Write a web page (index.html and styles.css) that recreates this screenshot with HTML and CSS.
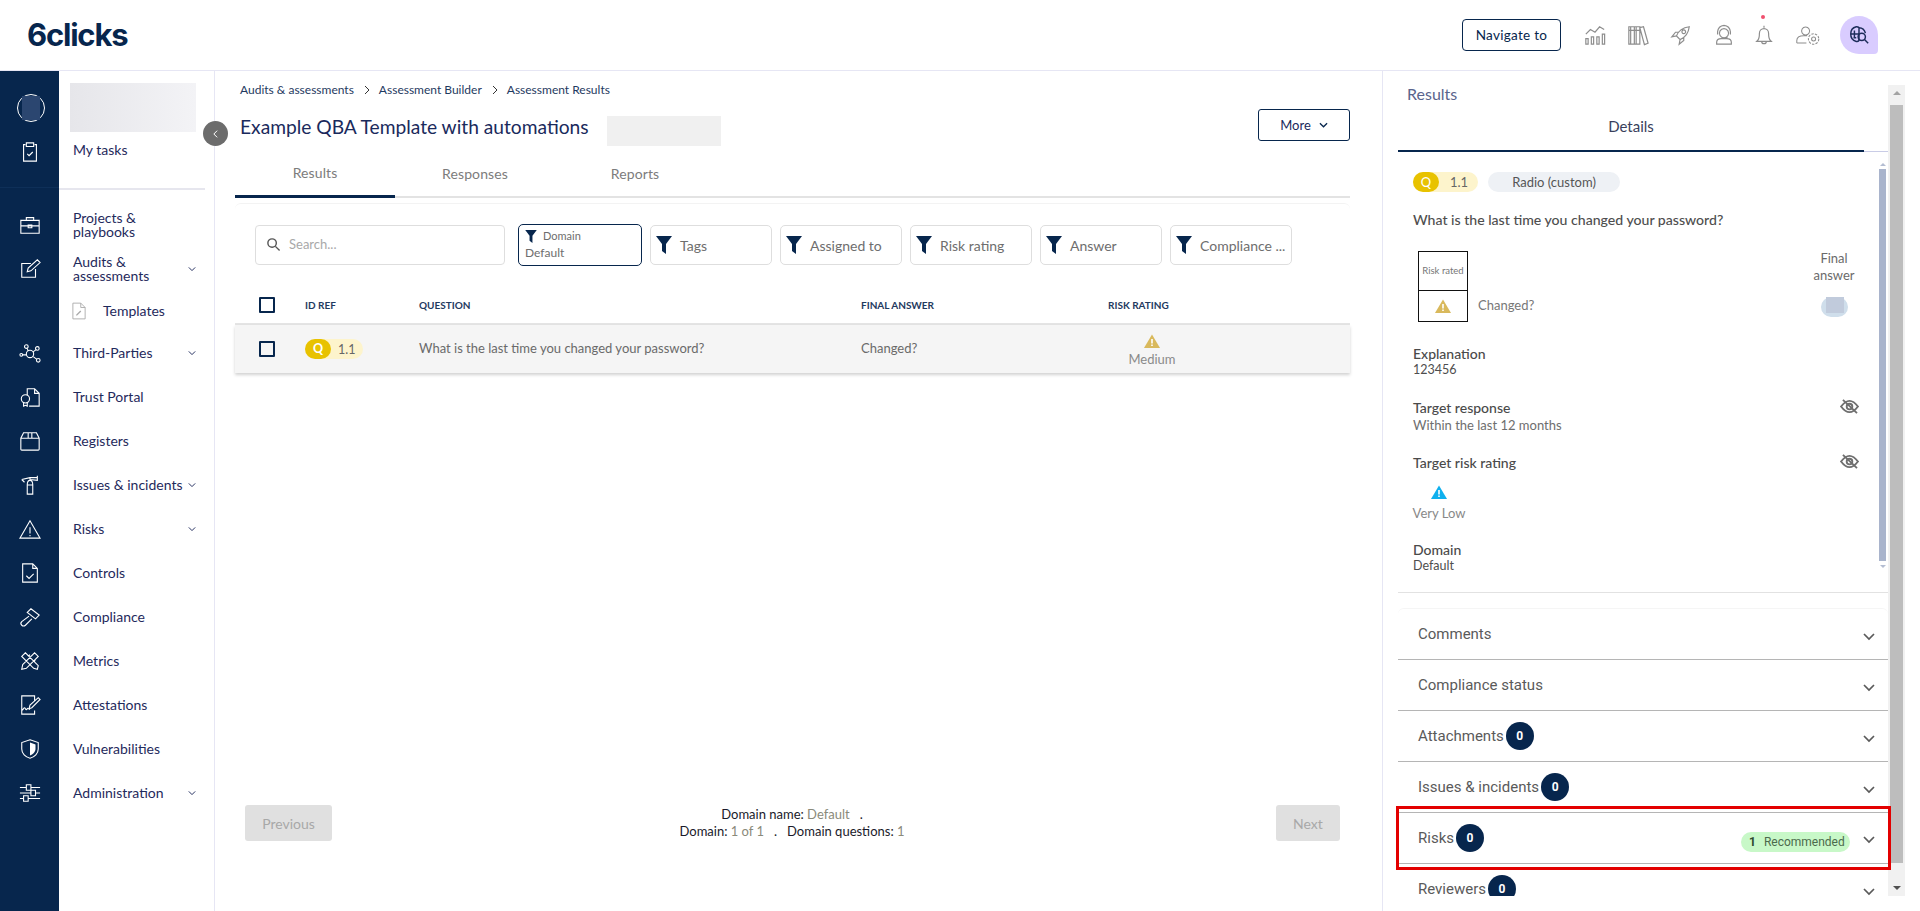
FILE: index.html
```html
<!DOCTYPE html>
<html lang="en">
<head>
<meta charset="utf-8">
<title>Assessment Results</title>
<link rel="stylesheet" href="styles.css">
</head>
<body>
<header class="topbar">
  <div class="logo">6clicks</div>
  <div class="top-actions">
    <button class="nav-btn">Navigate to</button>
    <svg class="hicon" viewBox="0 0 24 24"><path d="M2 11l5-5 5 3 5-6 5 3M2 22v-6h2.500v6zM8 22v-8h2.500v8zM14 22v-8h2.500v8zM20 22v-11h2.500v11z"/></svg>
    <svg class="hicon" viewBox="0 0 24 24"><path d="M2 3h6v19H2zM8 3h6v19H8zM2 7h12M14 4l4-1 5 18-4 1.500zM4 3v19M10 3v19"/></svg>
    <svg class="hicon" viewBox="0 0 24 24"><path d="M9 15l-2-2c2-5 6-9 14-10-1 8-5 12-10 14zM7 13l-5 1 4-5h4M11 17l-1 5 5-4v-4M15 6.500a2 2 0 1 0 .01 0"/></svg>
    <svg class="hicon tight" viewBox="0 0 24 24"><path d="M12 5a5 5 0 1 0 .01 0M12 1.500a8 8 0 0 0-7 7v3M12 1.500a8 8 0 0 1 7 7v3M4 22v-2c0-3 3-4 5-4h6c2 0 5 1 5 4v2zM12 15h4"/></svg>
    <svg class="hicon" viewBox="0 0 24 24"><path d="M12 2v2M5 18c2-2 2-4 2-8a5 5 0 0 1 10 0c0 4 0 6 2 8l1 1H4zM9.500 19a2.500 2.500 0 0 0 5 0"/></svg>
    <svg class="hicon wide" viewBox="0 0 30 24"><path d="M12 2a5 5 0 1 0 .01 0M1 22v-3c0-4 4-6 9-6h4M1 22h12"/><circle cx="22" cy="17" r="2.500"/><circle cx="22" cy="17" r="6.500" stroke-dasharray="3 1.500"/></svg>
    <div class="ai-btn">
      <svg viewBox="0 0 24 24"><path d="M9 3a8 8 0 0 0-6 8 8 8 0 0 0 6 8 3 3 0 0 0 3-1V4a4 4 0 0 0-3-1zM12 4c3 0 6 2 7 6M3 11h9M7 7v8M6 15h3"/><circle cx="15" cy="14" r="4"/><path d="M18 17l4 4"/></svg>
    </div>
    <span class="red-dot"></span>
  </div>
</header>

<div class="shell">
  <aside class="rail">
    <div class="rail-row"><span class="avatar"><span class="avatar-fill"></span></span></div>
    <div class="rail-row"><svg class="ricon" viewBox="0 0 24 24"><path d="M7 4H5v18h14V4h-2M8 2h8v4H8zM9 14l2 2 4-4"/></svg></div>
    <div class="rail-line"></div>
    <div class="rail-row"><svg class="ricon" viewBox="0 0 24 24"><path d="M2 7h20v14H2zM8 7V4h8v3M2 13h20M10 12h4v3h-4z"/></svg></div>
    <div class="rail-row"><svg class="ricon" viewBox="0 0 24 24"><path d="M18 12v9H3V6h10M9 15l1-4L20 2l3 3-10 9z"/></svg></div>
    <div class="rail-gap"></div>
    <div class="rail-row"><svg class="ricon" viewBox="0 0 24 24"><circle cx="12" cy="13" r="4"/><circle cx="8" cy="5" r="2"/><circle cx="20" cy="7" r="2"/><circle cx="21" cy="20" r="2"/><circle cx="2.500" cy="14" r="1.500"/><path d="M9 7l1 3M19 8l-4 3M19.500 19l-4-3M4 14h4"/></svg></div>
    <div class="rail-row"><svg class="ricon" viewBox="0 0 24 24"><path d="M9 10V3h8l5 5v14H11M17 3v5h5"/><circle cx="7" cy="14" r="4.500"/><path d="M5 18v4l2-1 2 1v-4"/></svg></div>
    <div class="rail-row"><svg class="ricon" viewBox="0 0 24 24"><path d="M5 3h14l3 6v12a1 1 0 0 1-1 1H3a1 1 0 0 1-1-1V9zM2 9h20M10 3v6h4V3"/></svg></div>
    <div class="rail-row"><svg class="ricon" viewBox="0 0 24 24"><path d="M9 12h6v10H9zM9 12c0-3 1-5 3-5s3 2 3 5M12 7V4M3 6l9-2h8M20 2v5l-8-1M3 6l3 3"/></svg></div>
    <div class="rail-row"><svg class="ricon" viewBox="0 0 24 24"><path d="M12 3L1 22h22zM12 10v7M12 18.500v1.500"/></svg></div>
    <div class="rail-row"><svg class="ricon" viewBox="0 0 24 24"><path d="M4 2h11l5 5v15H4zM15 2v5h5M8 15l3 3 5-5"/></svg></div>
    <div class="rail-row"><svg class="ricon" viewBox="0 0 24 24"><path d="M13 3l9 7-4 4-9-7zM11 11l-8 6a2.500 2.500 0 0 0 4 4l7-7"/></svg></div>
    <div class="rail-row"><svg class="ricon" viewBox="0 0 24 24"><path d="M4 16L17 3l4 4L8 20l-5 1zM3 7l4-4 14 14-1 4-4-1zM7 3l-2 2M10 7l2-2M16 13l2-2"/></svg></div>
    <div class="rail-row"><svg class="ricon" viewBox="0 0 24 24"><path d="M17 8V2H3v20h14v-4M3 18c2-1 2-3 3-3s1 2 2 2 1-2 2-1l2 1M11 16l1-4 9-8 2 2-9 9z"/></svg></div>
    <div class="rail-row"><svg class="ricon" viewBox="0 0 24 24"><path d="M12 2l9 3v7c0 5-4 9-9 10-5-1-9-5-9-10V5z"/><path class="fill" d="M12 5l6 2v5c0 3-3 6-6 7z"/></svg></div>
    <div class="rail-row"><svg class="ricon" viewBox="0 0 24 24"><path d="M1 6h7M13 6h10M1 12h12M18 12h5M1 18h4M10 18h13M8 3h5v6H8zM13 9h5v6h-5zM5 15h5v6H5z"/></svg></div>
  </aside>

  <nav class="sidebar">
    <div class="side-top">
      <div class="org-ph"></div>
      <div class="side-link tasks">My tasks</div>
    </div>
    <div class="side-sep"></div>
    <div class="side-row"><span>Projects &amp;<br>playbooks</span></div>
    <div class="side-row"><span>Audits &amp;<br>assessments</span><svg class="chev" viewBox="0 0 10 6"><path d="M1 1l4 4 4-4"/></svg></div>
    <div class="side-row sub">
      <svg class="tpl" viewBox="0 0 16 20"><path d="M1 1h9l5 5v13H1zM10 1v5h5"/><path d="M5 15l5-5" class="thick"/></svg>
      <span>Templates</span>
    </div>
    <div class="side-row"><span>Third-Parties</span><svg class="chev" viewBox="0 0 10 6"><path d="M1 1l4 4 4-4"/></svg></div>
    <div class="side-row"><span>Trust Portal</span></div>
    <div class="side-row"><span>Registers</span></div>
    <div class="side-row"><span>Issues &amp; incidents</span><svg class="chev" viewBox="0 0 10 6"><path d="M1 1l4 4 4-4"/></svg></div>
    <div class="side-row"><span>Risks</span><svg class="chev" viewBox="0 0 10 6"><path d="M1 1l4 4 4-4"/></svg></div>
    <div class="side-row"><span>Controls</span></div>
    <div class="side-row"><span>Compliance</span></div>
    <div class="side-row"><span>Metrics</span></div>
    <div class="side-row"><span>Attestations</span></div>
    <div class="side-row"><span>Vulnerabilities</span></div>
    <div class="side-row"><span>Administration</span><svg class="chev" viewBox="0 0 10 6"><path d="M1 1l4 4 4-4"/></svg></div>
    <button class="collapse"><svg viewBox="0 0 8 12"><path d="M6 2L2 6l4 4"/></svg></button>
  </nav>

  <main class="main">
    <div class="crumbs">
      <span>Audits &amp; assessments</span><svg class="crumb-sep" viewBox="0 0 6 10"><path d="M1 1l4 4-4 4"/></svg>
      <span>Assessment Builder</span><svg class="crumb-sep" viewBox="0 0 6 10"><path d="M1 1l4 4-4 4"/></svg>
      <span>Assessment Results</span>
    </div>
    <div class="title-row">
      <h1>Example QBA Template with automations</h1>
      <div class="title-ph"></div>
      <button class="more">More<svg viewBox="0 0 10 6"><path d="M1 1l4 4 4-4"/></svg></button>
    </div>
    <div class="tabs">
      <div class="tab active">Results</div>
      <div class="tab">Responses</div>
      <div class="tab">Reports</div>
    </div>
    <section class="card">
      <div class="filters">
        <div class="search">
          <svg viewBox="0 0 16 16"><circle cx="6.500" cy="6.500" r="4.500"/><path d="M10 10l4.500 4.500"/></svg>
          <span>Search...</span>
        </div>
        <div class="filter domain">
          <div class="dom-top"><svg class="funnel small" viewBox="0 0 16 18"><path d="M0 0h16L10 8v10L6 15V8z"/></svg><span>Domain</span></div>
          <div class="dom-val">Default</div>
        </div>
        <div class="filter"><svg class="funnel" viewBox="0 0 16 18"><path d="M0 0h16L10 8v10L6 15V8z"/></svg><span>Tags</span></div>
        <div class="filter"><svg class="funnel" viewBox="0 0 16 18"><path d="M0 0h16L10 8v10L6 15V8z"/></svg><span>Assigned to</span></div>
        <div class="filter"><svg class="funnel" viewBox="0 0 16 18"><path d="M0 0h16L10 8v10L6 15V8z"/></svg><span>Risk rating</span></div>
        <div class="filter"><svg class="funnel" viewBox="0 0 16 18"><path d="M0 0h16L10 8v10L6 15V8z"/></svg><span>Answer</span></div>
        <div class="filter"><svg class="funnel" viewBox="0 0 16 18"><path d="M0 0h16L10 8v10L6 15V8z"/></svg><span>Compliance ...</span></div>
      </div>
      <div class="thead">
        <div class="c-check"><span class="box"></span></div>
        <div class="c-id">ID REF</div>
        <div class="c-q">QUESTION</div>
        <div class="c-a">FINAL ANSWER</div>
        <div class="c-r">RISK RATING</div>
      </div>
      <div class="trow">
        <div class="c-check"><span class="box"></span></div>
        <div class="c-id"><span class="qpill"><span class="qmark">Q</span><span class="qnum">1.1</span></span></div>
        <div class="c-q row-text">What is the last time you changed your password?</div>
        <div class="c-a row-text">Changed?</div>
        <div class="c-r rating">
          <svg class="warn" viewBox="0 0 16 14"><path class="tri-med" d="M8 0.500L16 14H0z"/><path class="mark" d="M7.200 5h1.600v4.500H7.200zM7.200 10.500h1.600V12H7.200z"/></svg>
          <span>Medium</span>
        </div>
      </div>
    </section>
    <div class="pager">
      <button class="pg-btn prev">Previous</button>
      <div class="pg-info">
        <div><b>Domain name:</b> <span>Default</span> &nbsp; <b>.</b></div>
        <div><b>Domain:</b> <span>1 of 1</span> &nbsp; <b>.</b> &nbsp; <b>Domain questions:</b> <span>1</span></div>
      </div>
      <button class="pg-btn next">Next</button>
    </div>
  </main>

  <aside class="panel">
    <div class="panel-body">
      <div class="panel-title">Results</div>
      <div class="panel-tabs"><div class="panel-tab">Details</div></div>
      <div class="detail-wrap">
        <div class="detail">
          <div class="pills">
            <span class="qpill wide-pill"><span class="qmark light">Q</span><span class="qnum">1.1</span></span>
            <span class="type-pill">Radio (custom)</span>
          </div>
          <div class="d-question">What is the last time you changed your password?</div>
          <div class="answers">
            <div class="risk-table">
              <div class="rt-head">Risk rated</div>
              <div class="rt-cell"><svg class="warn" viewBox="0 0 16 14"><path class="tri-med" d="M8 0.500L16 14H0z"/><path class="mark" d="M7.200 5h1.600v4.500H7.200zM7.200 10.500h1.600V12H7.200z"/></svg></div>
            </div>
            <div class="ans-text">Changed?</div>
            <div class="final">
              <div class="final-label">Final<br>answer</div>
              <div class="blob"><span></span></div>
            </div>
          </div>
          <div class="field explanation"><div class="f-label">Explanation</div><div class="f-val dark">123456</div></div>
          <div class="field target">
            <div class="f-label">Target response</div><div class="f-val wide-val">Within the last 12 months</div>
            <svg class="eye" viewBox="0 0 20 16"><path d="M1 8c3-4 6-6 9-6s6 2 9 6c-3 4-6 6-9 6s-6-2-9-6z"/><circle cx="10" cy="8" r="3"/><path d="M3 1l15 14"/></svg>
          </div>
          <div class="field target risk">
            <div class="f-label">Target risk rating</div>
            <svg class="eye" viewBox="0 0 20 16"><path d="M1 8c3-4 6-6 9-6s6 2 9 6c-3 4-6 6-9 6s-6-2-9-6z"/><circle cx="10" cy="8" r="3"/><path d="M3 1l15 14"/></svg>
            <div class="vlow">
              <svg class="warn" viewBox="0 0 16 14"><path class="tri-low" d="M8 0.500L16 14H0z"/><path class="mark" d="M7.200 5h1.600v4.500H7.200zM7.200 10.500h1.600V12H7.200z"/></svg>
              <span>Very Low</span>
            </div>
          </div>
          <div class="field domain-f"><div class="f-label">Domain</div><div class="f-val dark">Default</div></div>
        </div>
        <div class="mini-bar"><i class="up"></i><span class="mini-thumb"></span><i class="down"></i></div>
      </div>
      <div class="accordion">
        <div class="acc first"><span class="acc-t">Comments</span><svg class="acc-chev" viewBox="0 0 12 8"><path d="M1 1l5 5 5-5"/></svg></div>
        <div class="acc"><span class="acc-t">Compliance status</span><svg class="acc-chev" viewBox="0 0 12 8"><path d="M1 1l5 5 5-5"/></svg></div>
        <div class="acc"><span class="acc-t">Attachments</span><span class="count">0</span><svg class="acc-chev" viewBox="0 0 12 8"><path d="M1 1l5 5 5-5"/></svg></div>
        <div class="acc"><span class="acc-t">Issues &amp; incidents</span><span class="count">0</span><svg class="acc-chev" viewBox="0 0 12 8"><path d="M1 1l5 5 5-5"/></svg></div>
        <div class="acc"><span class="acc-t">Risks</span><span class="count">0</span><span class="rec"><b>1</b>Recommended</span><svg class="acc-chev up-a" viewBox="0 0 12 8"><path d="M1 1l5 5 5-5"/></svg></div>
        <div class="acc"><span class="acc-t">Reviewers</span><span class="count">0</span><svg class="acc-chev" viewBox="0 0 12 8"><path d="M1 1l5 5 5-5"/></svg></div>
      </div>
    </div>
    <div class="scrollbar"><i class="up"></i><span class="thumb"></span><span class="rest"></span><i class="down"></i></div>
    <div class="highlight"></div>
  </aside>
</div>
</body>
</html>
```
FILE: styles.css
```css
* { box-sizing: border-box; }
html, body { margin: 0; height: 911px; overflow: hidden; background: #fff; }
body { font-family: "Lato", "Liberation Sans", sans-serif; color: #07264d; }
button { font-family: inherit; }
svg { display: block; }

.topbar { height: 71px; border-bottom: 1px solid #e6e6f4; display: flex; align-items: center; justify-content: space-between; padding: 0 42px 0 27px; }
.logo { font-family: "Inter", sans-serif; font-weight: 700; font-size: 31px; letter-spacing: -1.200px; color: #07264d; line-height: 34px; margin-top: -1px; }
.top-actions { display: flex; align-items: center; position: relative; }
.nav-btn { width: 99px; height: 32px; background: #fff; border: 1px solid #07264d; border-radius: 4px; font-size: 13.500px; letter-spacing: .3px; color: #07264d; padding: 0; margin-right: 23px; }
.hicon { width: 22px; height: 22px; fill: none; stroke: #8d8d8d; stroke-width: 1.300; margin-right: 21px; }
.hicon.tight { margin-right: 18px; }
.hicon.wide { width: 24px; margin-right: 20px; }
.ai-btn { width: 38px; height: 38px; border-radius: 50% 50% 4px 50%; background: #d9ccff; display: flex; align-items: center; justify-content: center; }
.ai-btn svg { width: 22px; height: 22px; fill: none; stroke: #1d2d5a; stroke-width: 1.600; }
.red-dot { position: absolute; left: 299px; top: -1px; width: 4px; height: 4px; border-radius: 50%; background: #f0506e; }

.shell { display: flex; height: 840px; }

.rail { width: 59px; flex: none; background: #07264d; padding-top: 15px; }
.rail-row { height: 44px; display: flex; align-items: center; justify-content: center; }
.rail-line { height: 1px; margin: 13px 0 15px; background: #0e2f58; }
.rail-gap { height: 40px; }
.ricon { width: 22px; height: 22px; fill: none; stroke: #fff; stroke-width: 1.200; }
.ricon .fill { fill: #fff; stroke: none; }
.avatar { width: 28px; height: 28px; border: 1px solid #fff; border-radius: 50%; display: flex; align-items: center; justify-content: center; margin-left: 2px; }
.avatar-fill { width: 18px; height: 24px; background: #2b4670; }

.sidebar { width: 156px; flex: none; border-right: 1px solid #e6e6f4; position: relative; }
.side-top { padding: 12px 0 0 11px; height: 117px; }
.org-ph { width: 126px; height: 49px; background: linear-gradient(90deg, #e6e6ea, #f3f3f6); }
.side-link { font-size: 14px; line-height: 18px; color: #1f2a5c; }
.tasks { margin: 9px 0 0 3px; }
.side-sep { height: 2px; margin-right: 9px; background: #e6e6ee; margin-bottom: 13px; }
.side-row { height: 44px; padding-left: 14px; display: flex; align-items: center; font-size: 14px; line-height: 14px; color: #1f2a5c; position: relative; }
.chev { position: absolute; left: 129px; top: 19px; width: 8px; height: 6px; fill: none; stroke: #1f2a5c; stroke-width: 1.200; }
.sub { height: 40px; padding-left: 13px; }
.sub span { margin-left: 17px; }
.tpl { width: 14px; height: 18px; fill: none; stroke: #a8a8a8; stroke-width: 1; }
.tpl .thick { stroke-width: 1.600; }
.collapse { position: absolute; left: 144px; top: 50px; width: 25px; height: 25px; border: 0; border-radius: 50%; background: #6c6c6c; display: flex; align-items: center; justify-content: center; padding: 0; }
.collapse svg { width: 7px; height: 10px; fill: none; stroke: #fff; stroke-width: 1.200; }

.main { width: 1167px; flex: none; padding: 0 32px 0 20px; display: flex; flex-direction: column; }
.crumbs { height: 37px; display: flex; align-items: center; font-size: 12px; color: #1f3a5f; padding: 0 0 0 5px; }
.crumb-sep { width: 6px; height: 10px; margin: 0 9px 0 10px; fill: none; stroke: #333; stroke-width: 1; }
.title-row { display: flex; align-items: center; height: 38px; padding-left: 5px; position: relative; }
h1 { margin: 0; font-size: 19.200px; line-height: 24px; font-weight: 400; color: #1a2a5c; }
.title-ph { width: 114px; height: 30px; background: #f0f0f0; margin: 7px 0 0 18px; }
.more { margin-left: auto; width: 92px; height: 32px; background: #fff; border: 1px solid #07264d; border-radius: 3px; display: flex; align-items: center; justify-content: center; font-size: 13px; color: #1a2a5c; padding: 0; margin-top: -4px; }
.more svg { width: 9px; height: 6px; fill: none; stroke: #07264d; stroke-width: 1.400; margin-left: 8px; }
.tabs { display: flex; height: 51px; border-bottom: 2px solid #e3e3e3; margin-top: 1px; }
.tab { width: 160px; height: 51px; display: flex; align-items: center; justify-content: center; font-size: 14px; color: #7c7c7c; letter-spacing: .1px; padding-top: 1px; }
.tab.active { border-bottom: 3px solid #07264d; padding-top: 3px; }
.card { margin-top: 5px; border-top: 1px solid #f3f3f3; border-radius: 6px 6px 0 0; }
.filters { display: flex; align-items: center; padding: 20px 0 0 20px; height: 62px; }
.search { width: 250px; height: 40px; border: 1px solid #dedede; border-radius: 4px; display: flex; align-items: center; padding: 0 0 2px 10px; font-size: 13px; color: #a9a9a9; margin-right: 13px; }
.search svg { width: 15px; height: 15px; fill: none; stroke: #555; stroke-width: 1.500; margin-right: 8px; }
.filter { width: 122px; height: 40px; border: 1px solid #dedede; border-radius: 5px; display: flex; align-items: center; padding-left: 5px; font-size: 14px; color: #6e6e6e; margin-right: 8px; flex: none; }
.filter > span { margin-left: 8px; }
.funnel { width: 16px; height: 18px; fill: #07264d; flex: none; }
.funnel.small { width: 12px; height: 13px; }
.filter.domain { display: block; width: 124px; height: 42px; border-color: #07264d; padding: 4px 0 0 6px; font-size: 12px; }
.dom-top { display: flex; align-items: center; font-size: 11px; line-height: 14px; }
.dom-top span { margin-left: 6px; }
.dom-val { line-height: 16px; margin-top: 2px; }
.thead, .trow { display: flex; align-items: center; }
.thead { height: 59px; padding-top: 21px; font-size: 10px; font-weight: 700; color: #1f3a5f; border-bottom: 2px solid #e4e4e4; }
.c-check { width: 70px; padding-left: 24px; flex: none; }
.c-id { width: 114px; flex: none; }
.c-q { width: 442px; flex: none; }
.c-a { width: 214px; flex: none; }
.c-r { width: 90px; flex: none; padding-left: 33px; white-space: nowrap; }
.box { display: block; width: 16px; height: 16px; border: 2px solid #07264d; border-radius: 1px; }
.trow { height: 48px; background: #f5f5f5; box-shadow: 0 2px 3px rgba(0,0,0,.18); font-size: 13px; color: #6a6a6a; }
.row-text { margin-top: -2px; }
.qpill { display: inline-flex; align-items: center; width: 58px; height: 20px; border-radius: 10px; background: #fdf4cc; font-size: 12.500px; color: #666; }
.wide-pill { width: 65px; font-size: 13px; }
.qmark { width: 26px; height: 20px; border-radius: 10px; background: #e8c200; color: #fff; font-weight: 700; text-align: center; line-height: 20px; margin-right: 7px; flex: none; }
.qmark.light { font-weight: 400; margin-right: 11px; }
.rating { display: flex; flex-direction: column; align-items: center; padding-left: 0; margin-left: 55px; width: 44px; color: #8a8a8a; line-height: 16px; padding-top: 2px; }
.rating .warn { margin-bottom: 3px; }
.warn { width: 16px; height: 14px; flex: none; }
.tri-med { fill: #d9b95c; }
.tri-low { fill: #0fb0ee; }
.mark { fill: #fff; }
.pager { margin-top: auto; margin-bottom: 70px; display: flex; align-items: center; justify-content: space-between; padding: 0 10px; }
.pg-btn { height: 36px; border: 0; border-radius: 3px; background: #e0e0e0; color: #a8a8a8; font-size: 14px; padding: 0; }
.prev { width: 87px; }
.next { width: 64px; }
.pg-info { text-align: center; font-size: 13px; line-height: 17px; color: #8a8a7a; margin-right: 24px; }
.pg-info b { font-weight: 400; color: #1a1a2a; }

.panel { flex: 1; border-left: 1px solid #e6e6f4; padding: 14px 15px 15px 15px; display: flex; min-width: 0; position: relative; }
.panel-body { width: 490px; height: 811px; overflow: hidden; }
.panel-title { font-size: 16px; line-height: 17px; color: #5a648c; padding: 0 0 0 9px; }
.panel-tabs { height: 50px; border-bottom: 1px solid #c9cce6; }
.panel-tab { width: 466px; height: 50px; border-bottom: 2px solid #07264d; text-align: center; font-size: 15px; line-height: 48px; color: #3a3f5c; margin-bottom: -1px; }
.detail-wrap { height: 441px; border-bottom: 1px solid #e2e2e2; display: flex; }
.detail { width: 481px; padding: 20px 0 0 15px; flex: none; }
.pills { display: flex; align-items: center; }
.type-pill { width: 132px; height: 20px; border-radius: 10px; background: #eef1f5; margin-left: 10px; text-align: center; font-size: 13px; line-height: 20px; color: #555; }
.d-question { font-size: 14.100px; line-height: 18px; color: #4e4e4e; margin-top: 19px; font-weight: 500; }
.answers { display: flex; margin-top: 22px; height: 71px; position: relative; }
.risk-table { width: 50px; margin-left: 5px; height: 71px; border: 1px solid #111; display: flex; flex-direction: column; }
.rt-head { height: 39px; border-bottom: 1px solid #111; font-size: 9.500px; color: #777; line-height: 38px; text-align: center; white-space: nowrap; }
.rt-cell { flex: 1; display: flex; align-items: center; justify-content: center; }
.ans-text { font-size: 13px; color: #777; margin: 45px 0 0 10px; line-height: 18px; }
.final { margin-left: auto; width: 60px; margin-right: 15px; margin-top: -1px; text-align: center; font-size: 13px; line-height: 16.500px; color: #6a6a6a; }
.blob { width: 27px; height: 20px; border-radius: 10px; background: #cfdeeb; margin: 14px auto 0; position: relative; }
.blob span { display: block; width: 18px; height: 16px; background: #c1cbdc; margin-left: 5px; }
.field { position: relative; }
.f-label { font-size: 14px; line-height: 16px; color: #4a4a4a; font-weight: 500; }
.f-val { font-size: 12.500px; line-height: 16px; color: #6e6e6e; }
.f-val.dark { color: #4e4e4e; }
.wide-val { font-size: 13px; margin-top: 1px; }
.explanation { margin-top: 24px; }
.target { margin-top: 22px; }
.target.risk { margin-top: 22px; height: 87px; }
.eye { position: absolute; right: 20px; top: -1px; width: 19px; height: 15px; fill: none; stroke: #6f6f6f; stroke-width: 2; }
.vlow { width: 52px; display: flex; flex-direction: column; align-items: center; margin-top: 14px; font-size: 13px; color: #888; line-height: 16px; }
.vlow span { white-space: nowrap; margin-top: 6px; }
.domain-f { margin-top: 0; }
.mini-bar { width: 7px; margin: 11px 0 0 0; display: flex; flex-direction: column; align-items: center; height: 418px; }
.mini-thumb { display: block; width: 7px; height: 392px; background: #a9b4cc; margin: 3px 0 4px; }
.mini-bar .up { border: 3px solid transparent; border-top: 0; border-bottom: 3px solid #b4bdd2; }
.mini-bar .down { border: 3px solid transparent; border-bottom: 0; border-top: 3px solid #b4bdd2; }
.accordion { margin-top: 15px; border-top: 1px solid #f5f5f5; border-radius: 6px 6px 0 0; }
.acc { height: 51px; border-top: 1px solid #b5b5b5; display: flex; align-items: center; padding: 0 13px 0 20px; font-family: "Roboto", sans-serif; font-size: 15px; color: #5a5a5a; position: relative; }
.acc.first { border-top: 0; height: 50px; }
.acc-t { margin-top: -1px; }
.count { width: 28px; height: 28px; border-radius: 50%; background: #07264d; color: #fff; font-size: 12px; font-weight: 700; text-align: center; line-height: 28px; margin-left: 2px; margin-top: -1px; }
.acc-chev { margin-left: auto; width: 12px; height: 8px; fill: none; stroke: #5a5a5a; stroke-width: 1.700; margin-top: 6px; }
.acc-chev.up-a { margin-left: 13px; margin-top: 3px; }
.rec { margin-left: auto; margin-top: 8px; height: 20px; width: 109px; border-radius: 10px; background: #c8f8c8; font-size: 12px; color: #4c6a4c; display: flex; align-items: center; padding-left: 8px; }
.rec b { margin-right: 8px; color: #2e4a2e; }
.highlight { position: absolute; left: 13px; top: 735px; width: 495px; height: 64px; border: 3px solid #e30000; }
.scrollbar { width: 17px; flex: none; background: #f1f1f1; height: 811px; display: flex; flex-direction: column; align-items: center; }
.thumb { display: block; width: 13px; height: 758px; background: #bdbdbd; margin-top: 10px; }
.rest { flex: 1; }
.scrollbar .up { margin-top: 6px; border: 4px solid transparent; border-top: 0; border-bottom: 4px solid #a3a3a3; }
.scrollbar .down { margin-bottom: 6px; border: 4px solid transparent; border-bottom: 0; border-top: 4px solid #505050; }
```
